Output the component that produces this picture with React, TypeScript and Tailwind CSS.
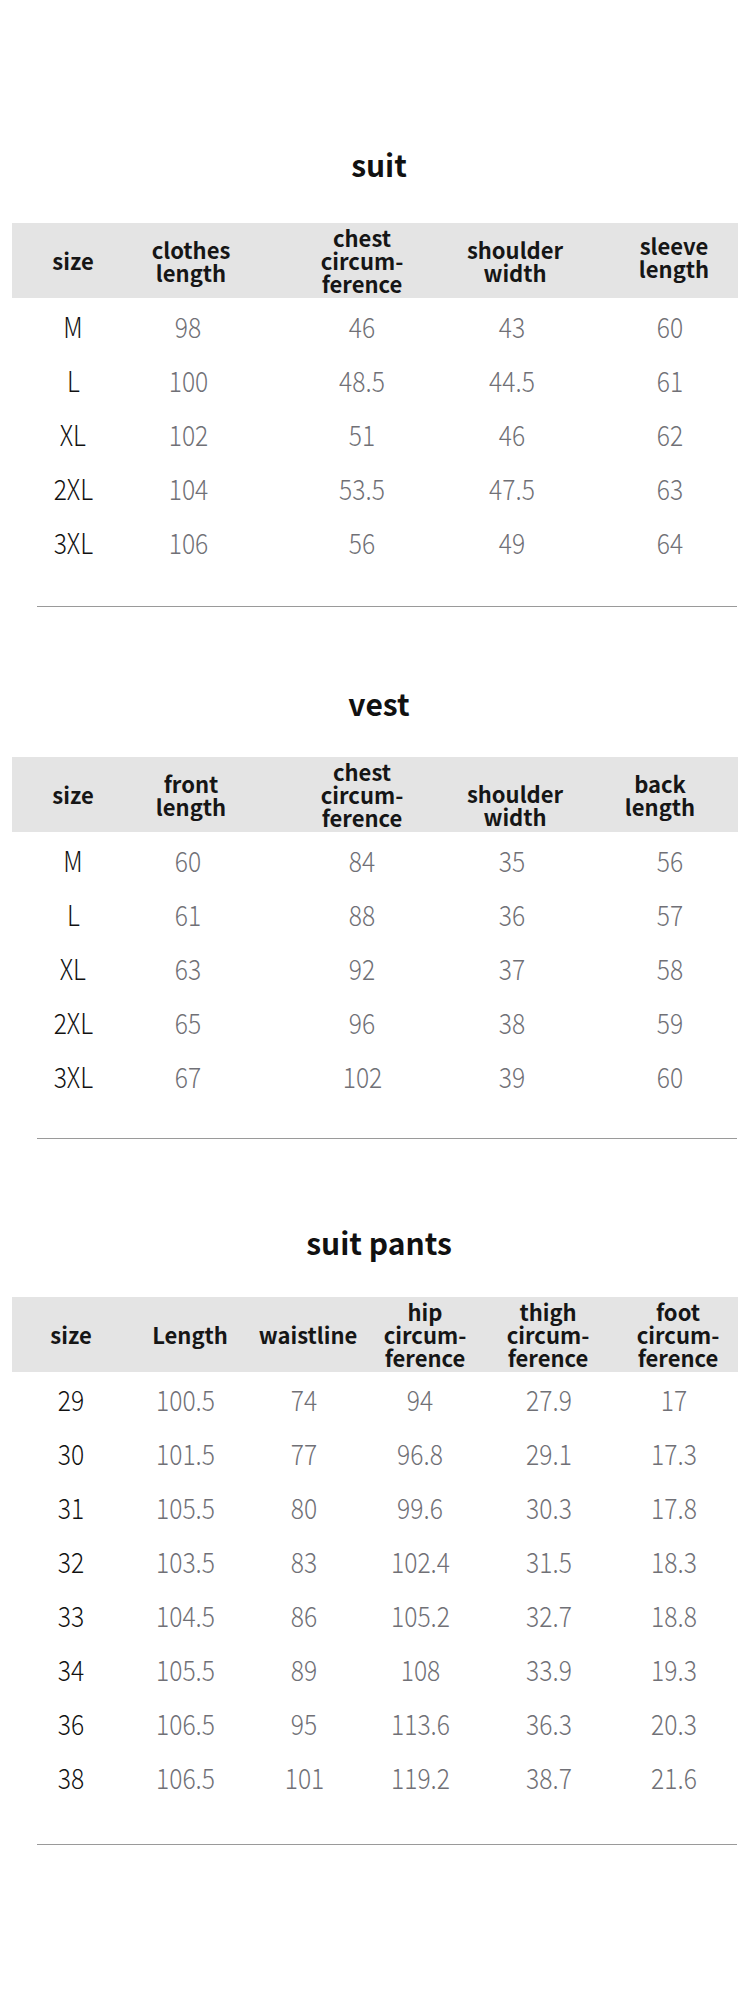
import React from "react"

const font = "font-['Noto_Sans_CJK_SC','Noto_Sans',sans-serif]"

type Table = {
    title: string
    titleMt: string
    bandMt: string
    rowsPt: string
    dividerMt: string
    headCols: string[]
    dataCols: string[]
    headers: string[][]
    rows: string[][]
}

// cell widths + left margins so that each column centre lands where the chart has it
const fiveData = [
    "w-[100px] ml-[11px]",
    "w-[130px] ml-[0px]",
    "w-[150px] ml-[34px]",
    "w-[140px] ml-[5px]",
    "w-[120px] ml-[28px]",
]

const sixData = [
    "w-[90px] ml-[14px]",
    "w-[100px] ml-[19px]",
    "w-[110px] ml-[14px]",
    "w-[100px] ml-[11px]",
    "w-[100px] ml-[29px]",
    "w-[100px] ml-[25px]",
]

const tables: Table[] = [
    {
        title: "suit",
        titleMt: "mt-[145px]",
        bandMt: "mt-[41px]",
        rowsPt: "pt-[1px]",
        dividerMt: "mt-[37px]",
        headCols: [
            "w-[100px] ml-[11px]",
            "w-[130px] ml-[3px]",
            "w-[150px] ml-[31px]",
            "w-[140px] ml-[8px]",
            "w-[120px] ml-[29px] mb-[8px]",
        ],
        dataCols: fiveData,
        headers: [
            ["size"],
            ["clothes", "length"],
            ["chest", "circum-", "ference"],
            ["shoulder", "width"],
            ["sleeve", "length"],
        ],
        rows: [
            ["M", "98", "46", "43", "60"],
            ["L", "100", "48.5", "44.5", "61"],
            ["XL", "102", "51", "46", "62"],
            ["2XL", "104", "53.5", "47.5", "63"],
            ["3XL", "106", "56", "49", "64"],
        ],
    },
    {
        title: "vest",
        titleMt: "mt-[78px]",
        bandMt: "mt-[36px]",
        rowsPt: "pt-[1px]",
        dividerMt: "mt-[35px]",
        headCols: [
            "w-[100px] ml-[11px]",
            "w-[130px] ml-[3px]",
            "w-[150px] ml-[31px]",
            "w-[140px] ml-[8px] mt-[20px]",
            "w-[120px] ml-[15px]",
        ],
        dataCols: fiveData,
        headers: [
            ["size"],
            ["front", "length"],
            ["chest", "circum-", "ference"],
            ["shoulder", "width"],
            ["back", "length"],
        ],
        rows: [
            ["M", "60", "84", "35", "56"],
            ["L", "61", "88", "36", "57"],
            ["XL", "63", "92", "37", "58"],
            ["2XL", "65", "96", "38", "59"],
            ["3XL", "67", "102", "39", "60"],
        ],
    },
    {
        title: "suit pants",
        titleMt: "mt-[85px]",
        bandMt: "mt-[37px]",
        rowsPt: "pt-0",
        dividerMt: "mt-[40px]",
        headCols: [
            "w-[90px] ml-[14px]",
            "w-[100px] ml-[24px]",
            "w-[110px] ml-[13px]",
            "w-[100px] ml-[12px]",
            "w-[100px] ml-[23px]",
            "w-[100px] ml-[30px]",
        ],
        dataCols: sixData,
        headers: [
            ["size"],
            ["Length"],
            ["waistline"],
            ["hip", "circum-", "ference"],
            ["thigh", "circum-", "ference"],
            ["foot", "circum-", "ference"],
        ],
        rows: [
            ["29", "100.5", "74", "94", "27.9", "17"],
            ["30", "101.5", "77", "96.8", "29.1", "17.3"],
            ["31", "105.5", "80", "99.6", "30.3", "17.8"],
            ["32", "103.5", "83", "102.4", "31.5", "18.3"],
            ["33", "104.5", "86", "105.2", "32.7", "18.8"],
            ["34", "105.5", "89", "108", "33.9", "19.3"],
            ["36", "106.5", "95", "113.6", "36.3", "20.3"],
            ["38", "106.5", "101", "119.2", "38.7", "21.6"],
        ],
    },
]

function SizeTable({ table }: { table: Table }) {
    return (
        <section>
            <h2 className={`${table.titleMt} h-[36px] pl-[8px] text-center text-[30px] leading-[36px] font-bold text-[#111]`}>
                {table.title}
            </h2>

            <div className={`${table.bandMt} mx-[12px] h-[75px] bg-[#e4e4e4] flex items-center`}>
                {table.headers.map((lines, i) => (
                    <div
                        key={i}
                        className={`${table.headCols[i]} shrink-0 flex flex-col items-center text-center text-[22px] leading-[23px] font-bold text-[#161616]`}
                    >
                        {lines.map((line) => (
                            <span key={line}>{line}</span>
                        ))}
                    </div>
                ))}
            </div>

            <div className={`${table.rowsPt} mx-[12px]`}>
                {table.rows.map((row) => (
                    <div key={row[0]} className="flex h-[54px] items-center">
                        {row.map((value, i) => (
                            <div
                                key={i}
                                className={`${table.dataCols[i]} shrink-0 text-center text-[28px] leading-[54px] font-light ${i === 0 ? "text-[#111]" : "text-[#707076]"}`}
                            >
                                {/* narrow the digits towards the condensed face of the chart */}
                                <span className="inline-block scale-x-[0.88]">{value}</span>
                            </div>
                        ))}
                    </div>
                ))}
            </div>

            <div className={`${table.dividerMt} ml-[37px] mr-[13px] h-px bg-[#9a9a9a]`} />
        </section>
    )
}

export default function App() {
    return (
        <div className={`${font} w-[750px] h-[1991px] bg-white overflow-hidden`}>
            <div className="pt-px">
                {tables.map((t) => (
                    <SizeTable key={t.title} table={t} />
                ))}
            </div>
        </div>
    )
}
